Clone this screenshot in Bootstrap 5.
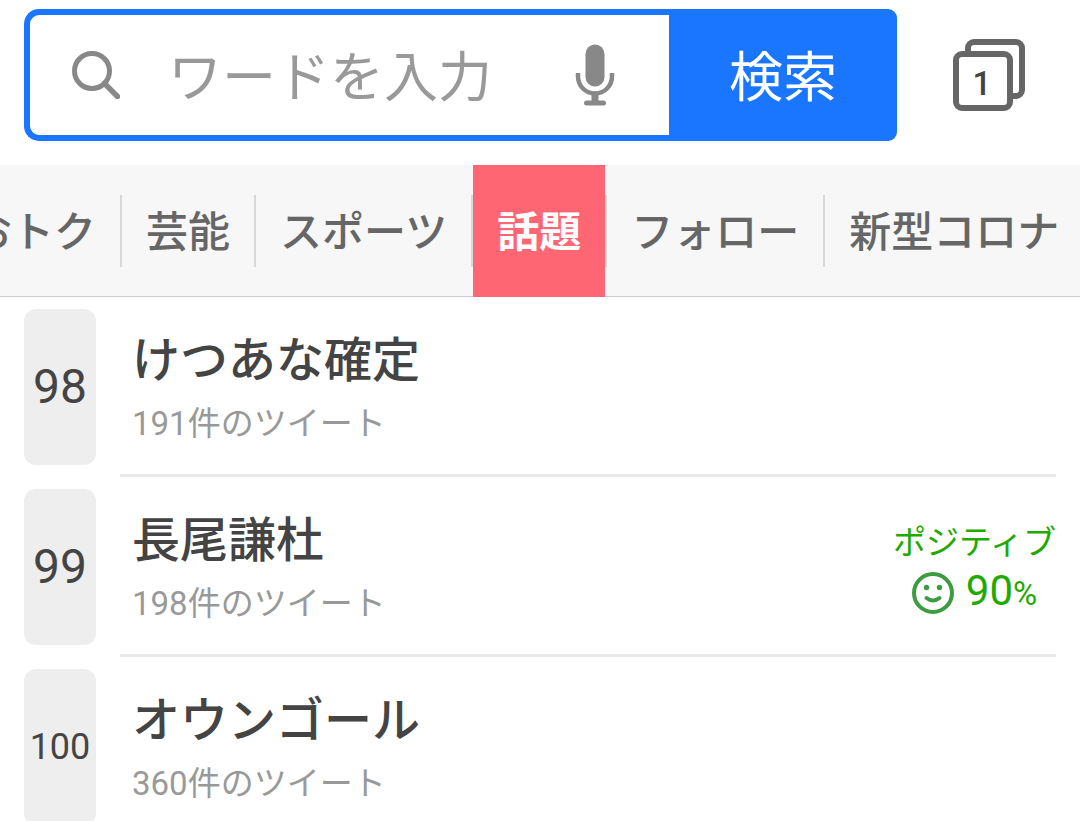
<!DOCTYPE html>
<html lang="ja">
<head>
<meta charset="utf-8">
<meta name="viewport" content="width=device-width, initial-scale=1">
<title>話題のキーワード</title>
<link href="https://cdn.jsdelivr.net/npm/bootstrap@5.3.0/dist/css/bootstrap.min.css" rel="stylesheet">
<style>
  body { font-family: Roboto, "Noto Sans CJK JP", sans-serif; color: #444; background: #fff; }
  .top-bar { padding: 9px 55px 24px 24px; gap: 56px; }
  .search-form { height: 132px; }
  .search-box { border: 6px solid #1a75ff; border-right: 0; border-radius: 15px 0 0 15px; padding: 0 54px 0 42px; gap: 48px; }
  .search-box .form-control { font-size: 54px; line-height: 72px; color: #444; }
  .search-box .form-control { padding: 8px 0 0; }
  .search-box .form-control::placeholder { color: #999; opacity: 1; }
  .search-btn { width: 228px; background: #1a75ff; color: #fff; font-size: 54px; border-radius: 0 9px 9px 0; padding: 6px 0 0; }
  .search-btn:hover { background: #0f66ea; color: #fff; }
  .tab-strip { background: #f7f7f7; height: 132px; overflow-x: auto; scrollbar-width: none; box-shadow: inset 0 -1px #ccc; }
  .tab-strip::-webkit-scrollbar { display: none; }
  .tab-strip .nav-link { padding: 2px 24px 0; font-size: 42px; font-weight: 500; color: #666; white-space: nowrap; }
  .tab-strip .nav-link.active { background: #ff6673; color: #fff; font-weight: 700; }
  .tab-rule { width: 2px; height: 72px; background: #d8d8d8; }
  .trend-row { height: 180px; padding: 0 24px; gap: 24px; color: #444; }
  .rank-box { width: 72px; height: 156px; margin-top: 12px; border-radius: 12px; background: #eee; font-size: 48px; }
  .rank-long { font-size: 36px; }
  .trend-body { border-bottom: 3px solid #e9e9e9; padding: 4px 0 0 12px; min-width: 0; }
  .trend-title { font-size: 48px; line-height: 72px; font-weight: 500; }
  .trend-count { font-size: 33px; line-height: 54px; color: #999; }
  .mood { color: #1faa00; font-size: 33px; line-height: 48px; padding-top: 2px; }
  .mood-score { font-size: 42px; }
  .mood-unit { font-size: 33px; }
</style>
<script src="https://cdn.jsdelivr.net/npm/bootstrap@5.3.0/dist/js/bootstrap.bundle.min.js"></script>
</head>
<body class="overflow-x-hidden">
<header class="top-bar d-flex align-items-center">
  <form class="search-form d-flex flex-grow-1" role="search">
    <div class="search-box d-flex align-items-center flex-grow-1">
      <svg class="flex-shrink-0" width="48" height="48" viewBox="0 0 48 48" fill="none" stroke="#888" stroke-width="5" aria-hidden="true">
        <circle cx="20" cy="20" r="17.5"/><path d="M32.5 32.5L45.5 45.5" stroke-width="5.5" stroke-linecap="round"/>
      </svg>
      <input class="form-control border-0 shadow-none bg-transparent" type="text" placeholder="ワードを入力" aria-label="ワードを入力">
      <button type="button" class="btn p-0 border-0 flex-shrink-0" aria-label="音声検索">
        <svg class="d-block" width="40" height="62" viewBox="0 0 40 62" fill="none" aria-hidden="true">
          <rect x="10.5" y="0.5" width="19" height="42" rx="9.5" fill="#888"/>
          <path d="M3 29v3.500a17 17 0 0 0 34 0V29" stroke="#888" stroke-width="4.500"/>
          <path d="M20 49v10" stroke="#888" stroke-width="7"/>
          <rect x="9" y="56.500" width="22" height="5" rx="2.500" fill="#888"/>
        </svg>
      </button>
    </div>
    <button type="submit" class="btn search-btn border-0 flex-shrink-0">検索</button>
  </form>
  <button type="button" class="btn p-0 border-0 flex-shrink-0" aria-label="タブ">
    <svg class="d-block" width="72" height="72" viewBox="0 0 72 72" fill="none" stroke="#666" stroke-width="6" aria-hidden="true">
      <path d="M15 13V9a6 6 0 0 1 6-6h42a6 6 0 0 1 6 6v42a6 6 0 0 1-6 6h-4"/>
      <rect x="3" y="15" width="54" height="54" rx="6"/>
      <text x="29" y="56" text-anchor="middle" font-size="33" font-weight="500" fill="#444" stroke="none">1</text>
    </svg>
  </button>
</header>

<nav class="tab-strip nav flex-nowrap align-items-center" aria-label="カテゴリ">
  <a class="nav-link h-100 d-flex align-items-center flex-shrink-0" href="#">おトク</a>
  <span class="tab-rule flex-shrink-0"></span>
  <a class="nav-link h-100 d-flex align-items-center flex-shrink-0" href="#">芸能</a>
  <span class="tab-rule flex-shrink-0"></span>
  <a class="nav-link h-100 d-flex align-items-center flex-shrink-0" href="#">スポーツ</a>
  <span class="tab-rule flex-shrink-0"></span>
  <a class="nav-link active h-100 d-flex align-items-center flex-shrink-0" href="#" aria-current="page">話題</a>
  <span class="tab-rule flex-shrink-0"></span>
  <a class="nav-link h-100 d-flex align-items-center flex-shrink-0" href="#">フォロー</a>
  <span class="tab-rule flex-shrink-0"></span>
  <a class="nav-link h-100 d-flex align-items-center flex-shrink-0" href="#">新型コロナ</a>
</nav>

<main>
  <a class="trend-row d-flex text-decoration-none" href="#">
    <span class="rank-box d-flex align-items-center justify-content-center flex-shrink-0">98</span>
    <span class="trend-body d-flex align-items-center flex-grow-1">
      <span class="flex-grow-1"><span class="trend-title d-block">けつあな確定</span><span class="trend-count d-block">191件のツイート</span></span>
    </span>
  </a>
  <a class="trend-row d-flex text-decoration-none" href="#">
    <span class="rank-box d-flex align-items-center justify-content-center flex-shrink-0">99</span>
    <span class="trend-body d-flex align-items-center flex-grow-1">
      <span class="flex-grow-1"><span class="trend-title d-block">長尾謙杜</span><span class="trend-count d-block">198件のツイート</span></span>
      <span class="mood d-flex flex-column align-items-center flex-shrink-0">
        <span>ポジティブ</span>
        <span class="d-flex align-items-center">
          <svg class="me-2" width="46" height="42" viewBox="0 0 46 42" fill="none" stroke="#3c9c40" stroke-width="4" aria-hidden="true">
            <circle cx="21" cy="21" r="19"/><path d="M14.500 26q6.500 5 13 0" stroke-linecap="round"/>
            <circle cx="14.500" cy="15.500" r="2.700" fill="#3c9c40" stroke="none"/><circle cx="27.500" cy="15.500" r="2.700" fill="#3c9c40" stroke="none"/>
          </svg>
          <span class="d-flex align-items-baseline"><span class="mood-score">90</span><span class="mood-unit">%</span></span>
        </span>
      </span>
    </span>
  </a>
  <a class="trend-row d-flex text-decoration-none" href="#">
    <span class="rank-box rank-long d-flex align-items-center justify-content-center flex-shrink-0">100</span>
    <span class="trend-body d-flex align-items-center flex-grow-1">
      <span class="flex-grow-1"><span class="trend-title d-block">オウンゴール</span><span class="trend-count d-block">360件のツイート</span></span>
    </span>
  </a>
</main>
<script>
  // Bring the current category, with its trailing rule, to the middle of the strip
  const strip = document.querySelector('.tab-strip');
  const current = strip.querySelector('.active');
  const itemWidth = current.offsetWidth + current.nextElementSibling.offsetWidth;
  strip.scrollLeft = current.offsetLeft + itemWidth / 2 - strip.clientWidth / 2;
</script>
</body>
</html>
